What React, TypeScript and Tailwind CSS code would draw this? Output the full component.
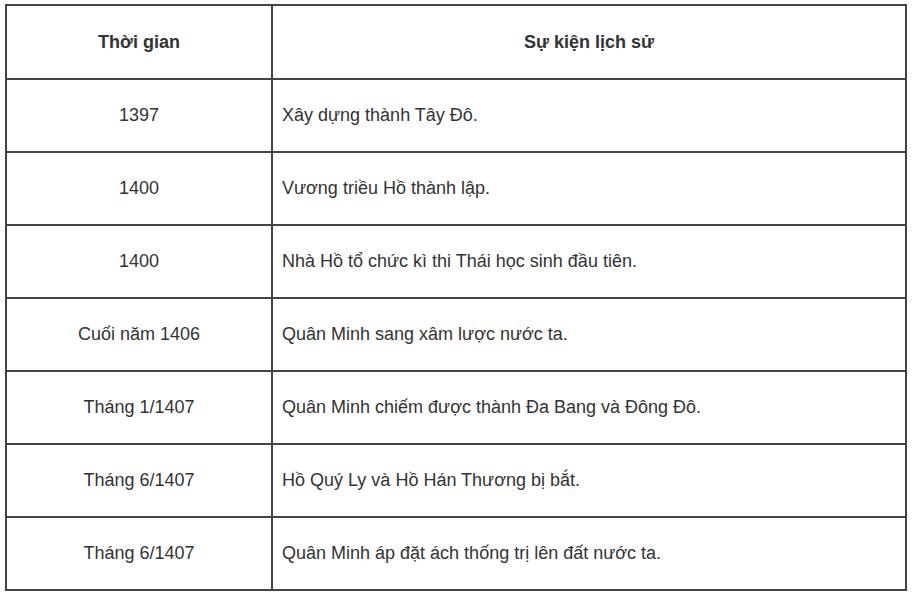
import React from "react";

const rows: [string, string][] = [
  ["1397", "Xây dựng thành Tây Đô."],
  ["1400", "Vương triều Hồ thành lập."],
  ["1400", "Nhà Hồ tổ chức kì thi Thái học sinh đầu tiên."],
  ["Cuối năm 1406", "Quân Minh sang xâm lược nước ta."],
  ["Tháng 1/1407", "Quân Minh chiếm được thành Đa Bang và Đông Đô."],
  ["Tháng 6/1407", "Hồ Quý Ly và Hồ Hán Thương bị bắt."],
  ["Tháng 6/1407", "Quân Minh áp đặt ách thống trị lên đất nước ta."],
];

export default function App() {
  return (
    <div
      className="w-[914px] h-[596px] bg-white pt-[4px] pl-[5px]"
      style={{ fontFamily: '"Liberation Sans", Arial, sans-serif' }}
    >
      <table className="border-collapse w-[902px] text-[18px] leading-[21px] text-[#333]">
        <colgroup>
          <col className="w-[266px]" />
          <col />
        </colgroup>
        <thead>
          <tr>
            <th className="h-[74px] border-2 border-[#444] text-center font-bold p-0">
              Thời gian
            </th>
            <th className="h-[74px] border-2 border-[#444] text-center font-bold p-0">
              Sự kiện lịch sử
            </th>
          </tr>
        </thead>
        <tbody>
          {rows.map(([t, e], i) => (
            <tr key={i}>
              <td className="h-[73px] border-2 border-[#444] text-center p-0">
                {t}
              </td>
              <td className="h-[73px] border-2 border-[#444] text-left p-0 pl-[9px]">
                {e}
              </td>
            </tr>
          ))}
        </tbody>
      </table>
    </div>
  );
}
